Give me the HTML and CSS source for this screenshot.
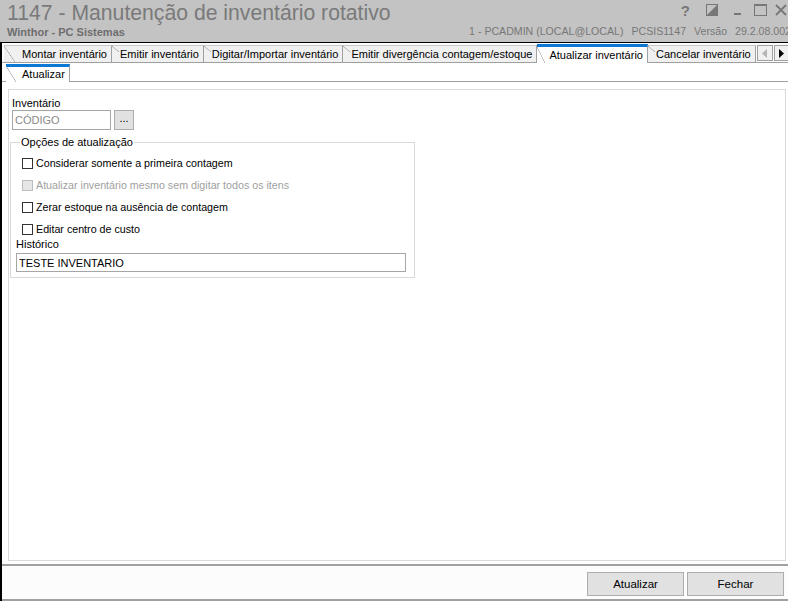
FILE: index.html
```html
<!DOCTYPE html>
<html lang="pt-BR">
<head>
  <meta charset="UTF-8">
  <title>1147 - Manutenção de inventário rotativo</title>
  <link rel="stylesheet" href="styles.css">
</head>
<body>
  <!-- Barra de título -->
  <header class="titlebar">
    <div class="title-left">
      <h1>1147 - Manutenção de inventário rotativo</h1>
      <div class="subtitle">Winthor - PC Sistemas</div>
    </div>
    <div class="title-right">
      <div class="controls">
        <span class="help">?</span>
        <svg class="ctl-theme" width="12" height="12" viewBox="0 0 12 12"><rect x="0.5" y="0.5" width="11" height="11" fill="none" stroke="#777"/><path d="M1 11 L11 1 L11 11 Z" fill="#777"/></svg>
        <svg class="ctl-min" width="8" height="12" viewBox="0 0 8 12"><rect x="0" y="9" width="7" height="2" fill="#777"/></svg>
        <svg class="ctl-max" width="13" height="12" viewBox="0 0 13 12"><rect x="0.5" y="0.5" width="12" height="11" fill="none" stroke="#777"/><rect x="0" y="0" width="13" height="2" fill="#777"/></svg>
        <svg class="ctl-close" width="12" height="12" viewBox="0 0 12 12"><path d="M1 1 L11 11 M11 1 L1 11" stroke="#777" stroke-width="1.8"/></svg>
      </div>
      <div class="info">
        <span>1 - PCADMIN (LOCAL@LOCAL)</span>
        <span>PCSIS1147</span>
        <span>Versão</span>
        <span>29.2.08.002</span>
      </div>
    </div>
  </header>

  <div class="frame">
    <!-- Abas principais -->
    <nav class="tabs">
      <span class="tab">Montar inventário</span>
      <span class="tab">Emitir inventário</span>
      <span class="tab">Digitar/Importar inventário</span>
      <span class="tab">Emitir divergência contagem/estoque</span>
      <span class="tab active">Atualizar inventário</span>
      <span class="tab">Cancelar inventário</span>
      <span class="scroll-btns">
        <span class="arrow"><svg width="6" height="9" viewBox="0 0 6 9"><path d="M5 0 L0 4.5 L5 9 Z" fill="#b4b4b4"/></svg></span>
        <span class="arrow"><svg width="6" height="9" viewBox="0 0 6 9"><path d="M0 0 L5 4.5 L0 9 Z" fill="#000"/></svg></span>
      </span>
    </nav>

    <div class="page">
      <nav class="subtabs">
        <span class="tab active">Atualizar</span>
      </nav>

      <div class="content">
        <div class="panel">
          <label class="field-label">Inventário</label>
          <div class="lookup">
            <input class="input code" type="text" value="CÓDIGO">
            <button class="dots">...</button>
          </div>

          <fieldset class="group">
            <legend>Opções de atualização</legend>
            <label class="check"><span class="box"></span>Considerar somente a primeira contagem</label>
            <label class="check disabled"><span class="box"></span>Atualizar inventário mesmo sem digitar todos os itens</label>
            <label class="check"><span class="box"></span>Zerar estoque na ausência de contagem</label>
            <label class="check"><span class="box"></span>Editar centro de custo</label>
            <label class="field-label hist">Histórico</label>
            <input class="input history" type="text" value="TESTE INVENTARIO">
          </fieldset>
        </div>
      </div>
    </div>

    <footer class="actions">
      <button class="btn">Atualizar</button>
      <button class="btn">Fechar</button>
    </footer>
  </div>
</body>
</html>
```

FILE: styles.css
```css
* {
  box-sizing: border-box;
}
body {
  margin: 0;
  width: 788px;
  height: 601px;
  overflow: hidden;
  font-family: "Liberation Sans", Arial, sans-serif;
  font-size: 11px;
  color: #000;
  background: #c3c3c3;
}

/* Barra de título */
.titlebar {
  height: 43px;
  display: flex;
  justify-content: space-between;
  border-bottom: 1px solid #000;
  background: #c3c3c3;
  color: #7a7a7a;
  white-space: nowrap;
}
.title-left {
  padding-left: 7px;
}
.titlebar h1 {
  margin: 0;
  font-size: 21.2px;
  font-weight: normal;
  line-height: 26px;
}
.subtitle {
  font-weight: bold;
  font-size: 11px;
  line-height: 13px;
  color: #6e6e6e;
}
.title-right {
  display: flex;
  flex-direction: column;
  align-items: flex-end;
}
.controls {
  display: flex;
  align-items: center;
  height: 20px;
  padding-right: 1px;
}
.help {
  font-size: 15px;
  font-weight: bold;
  color: #777;
}
.ctl-theme {
  margin-left: 16px;
}
.ctl-min {
  margin-left: 16px;
}
.ctl-max {
  margin-left: 12px;
}
.ctl-close {
  margin-left: 8px;
}
.info {
  display: flex;
  gap: 8px;
  margin-top: 5px;
  margin-right: -3px;
  font-size: 10.6px;
  color: #777;
}

/* Área da janela */
.frame {
  height: 558px;
  border-left: 2px solid #000;
  background: #fcfcfc;
  display: flex;
  flex-direction: column;
}

/* Abas */
.tabs {
  height: 20px;
  display: flex;
  align-items: flex-end;
  border-bottom: 1px solid #a0a0a0;
  background: #fcfcfc;
}
.tab {
  height: 17px;
  line-height: 16px;
  padding: 0 4px 0 8px;
  background:
    linear-gradient(to top right, transparent calc(50% - 0.6px), #a0a0a0 50%, transparent calc(50% + 0.6px)) no-repeat left top / 7px 6px,
    #f0f0f0;
  border-top: 1px solid #c8c8c8;
  border-right: 1px solid #a0a0a0;
  white-space: nowrap;
}
.tabs .tab:first-child {
  margin-left: 2px;
  padding-left: 18px;
  background:
    linear-gradient(to top right, transparent calc(50% - 0.6px), #a0a0a0 50%, transparent calc(50% + 0.6px)) no-repeat left top / 11px 100%,
    #f0f0f0;
}
.tab.active {
  height: 19px;
  line-height: 17px;
  padding-left: 12px;
  padding-right: 4px;
  border-top: 3px solid #0a78d4;
  background:
    linear-gradient(to top right, transparent calc(50% - 0.6px), #a0a0a0 50%, transparent calc(50% + 0.6px)) no-repeat left bottom / 8px 16px,
    #fff;
  margin-bottom: -1px;
}
.scroll-btns {
  display: flex;
  margin-left: auto;
  align-self: flex-end;
  margin-bottom: 1px;
}
.arrow {
  width: 16px;
  height: 16px;
  display: flex;
  align-items: center;
  justify-content: center;
  border: 1px solid #a0a0a0;
  background: #f0f0f0;
  margin-left: 1px;
}

/* Página */
.page {
  flex: 1;
  display: flex;
  flex-direction: column;
  background: #fff;
}
.subtabs {
  height: 19px;
  display: flex;
  align-items: flex-end;
  border-bottom: 1px solid #a0a0a0;
}
.subtabs .tab.active {
  height: 18px;
  line-height: 15px;
  padding-left: 16px;
  padding-right: 4px;
  border-top: 3px solid #0a78d4;
  border-right: 1px solid #a0a0a0;
  margin-left: 4px;
  background:
    linear-gradient(to top right, transparent calc(50% - 0.6px), #a0a0a0 50%, transparent calc(50% + 0.6px)) no-repeat left bottom / 10px 16px,
    #fff;
}
.content {
  flex: 1;
  padding: 7px 2px 3px 6px;
}
.panel {
  height: 100%;
  border: 1px solid #d9d9d9;
  padding: 6px 0 0 3px;
}
.field-label {
  display: block;
  line-height: 14px;
}
.lookup {
  display: flex;
  gap: 3px;
}
.input {
  height: 20px;
  border: 1px solid #a6a6a6;
  font-family: inherit;
  font-size: 11px;
  padding: 0 2px;
  background: #fff;
}
.code {
  width: 99px;
  color: #8a8a8a;
}
.dots {
  width: 20px;
  height: 20px;
  border: 1px solid #adadad;
  background: #e1e1e1;
  font-family: inherit;
  font-size: 11px;
  padding: 0 0 4px;
}
.group {
  width: 405px;
  margin: 6px 0 0 -2px;
  border: 1px solid #d9d9d9;
  padding: 4px 7px 5px 5px;
}
.group legend {
  padding: 0 1px;
  margin-left: 4px;
  line-height: 12px;
}
.check {
  display: flex;
  align-items: center;
  gap: 3px;
  height: 22px;
  padding-left: 6px;
  font-size: 10.7px;
}
.box {
  width: 11px;
  height: 11px;
  border: 1px solid #333;
  background: #fff;
}
.check.disabled {
  color: #a0a0a0;
}
.check.disabled .box {
  border-color: #bcbcbc;
  background: #e6e6e6;
}
.hist {
  margin-top: -3px;
}
.history {
  width: 390px;
  height: 19px;
  margin-top: 2px;
}

/* Rodapé */
.actions {
  height: 37px;
  display: flex;
  justify-content: flex-end;
  gap: 3px;
  padding: 6px 4px 0 0;
  border-top: 2px solid #a0a0a0;
  border-bottom: 2px solid #a0a0a0;
  background: #fcfcfc;
}
.btn {
  width: 97px;
  height: 24px;
  border: 1px solid #adadad;
  background: #e1e1e1;
  font-family: inherit;
  font-size: 11.5px;
  color: #000;
}
```
